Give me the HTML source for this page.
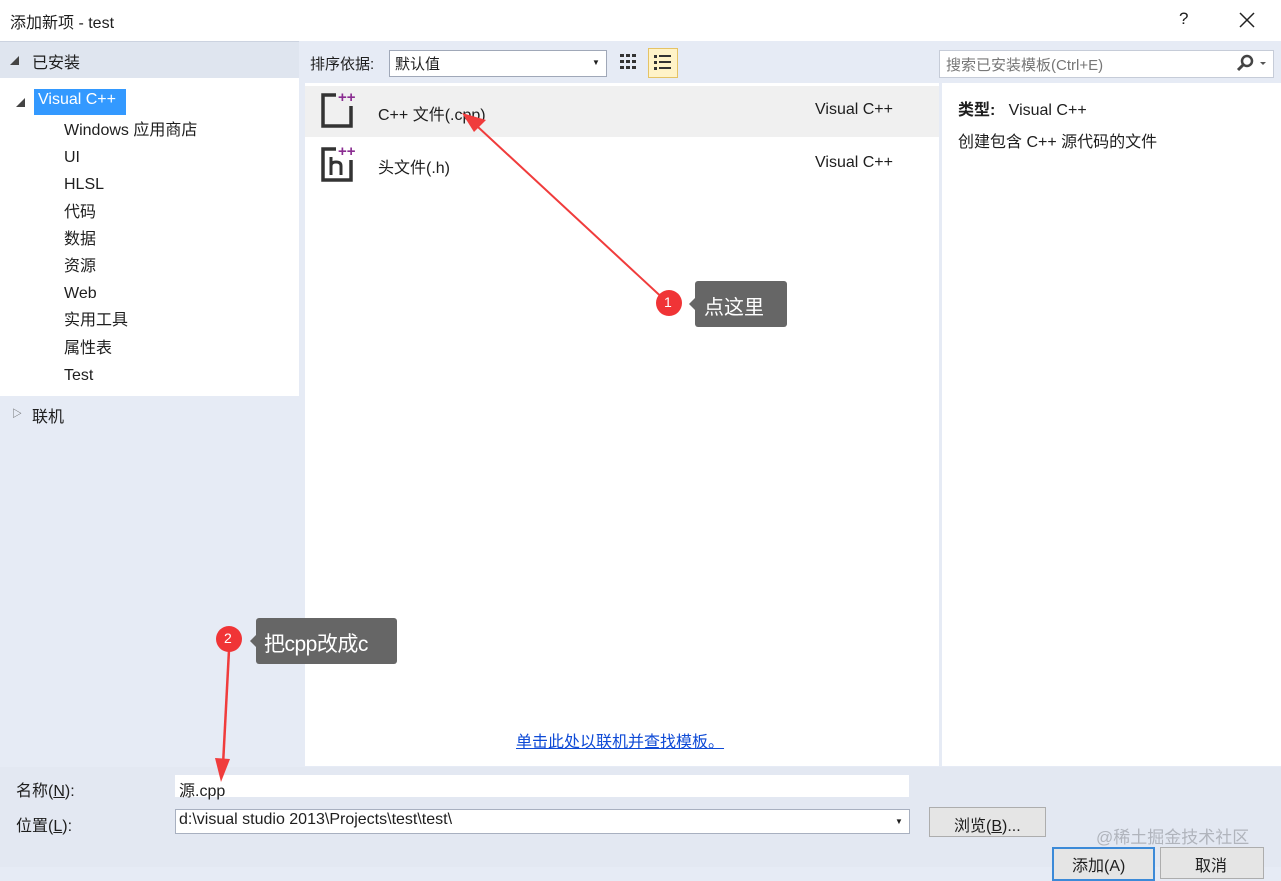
<!DOCTYPE html>
<html><head><meta charset="utf-8"><style>
body{margin:0;width:1281px;height:867px;overflow:hidden;background:#e6ebf5;font-family:"Liberation Sans","Noto Sans CJK SC",sans-serif;font-size:16px;color:#1e1e1e;position:relative}
.a{position:absolute}
</style></head><body>
<div class="a" style="left:0;top:0;width:1281px;height:41px;background:#fff"></div>
<div class="a" style="left:10px;top:9px;font-size:16px">添加新项 - test</div>
<div class="a" style="left:1179px;top:9px;font-size:17px">?</div>
<svg class="a" style="left:1239px;top:12px" width="16" height="16"><path d="M1 1L15 15M15 1L1 15" stroke="#222" stroke-width="1.5"/></svg>

<!-- left -->
<div class="a" style="left:0;top:41px;width:299px;height:36px;background:#dfe5ef;border-bottom:1px solid #ccd3e0;border-top:1px solid #ccd3e0"></div>
<div class="a" style="left:10px;top:54px;font-size:9px;color:#444">◢</div>
<div class="a" style="left:32px;top:49px">已安装</div>
<div class="a" style="left:0;top:78px;width:299px;height:318px;background:#fff"></div>
<div class="a" style="left:16px;top:96px;font-size:9px;color:#444">◢</div>
<div class="a" style="left:34px;top:89px;width:92px;height:26px;background:#3399ff"></div>
<div class="a" style="left:38px;top:91px;color:#fff">Visual C++</div>
<div class="a" style="left:64px;top:117px;line-height:27.2px">Windows 应用商店<br>UI<br>HLSL<br>代码<br>数据<br>资源<br>Web<br>实用工具<br>属性表<br>Test</div>
<div class="a" style="left:12px;top:405px;font-size:10px;color:#555">▷</div>
<div class="a" style="left:32px;top:403px">联机</div>

<!-- toolbar -->
<div class="a" style="left:310px;top:53px;font-size:15px">排序依据:</div>
<div class="a" style="left:389px;top:50px;width:216px;height:25px;background:#fff;border:1px solid #a0a8b8"></div>
<div class="a" style="left:395px;top:53px;font-size:15px">默认值</div>
<div class="a" style="left:592px;top:58px;font-size:8px">▼</div>
<svg class="a" style="left:619px;top:53px" width="20" height="20"><g fill="#333"><rect x="1" y="1" width="4" height="3"/><rect x="7" y="1" width="4" height="3"/><rect x="13" y="1" width="4" height="3"/><rect x="1" y="7" width="4" height="3"/><rect x="7" y="7" width="4" height="3"/><rect x="13" y="7" width="4" height="3"/><rect x="1" y="13" width="4" height="3"/><rect x="7" y="13" width="4" height="3"/><rect x="13" y="13" width="4" height="3"/></g></svg>
<div class="a" style="left:648px;top:48px;width:28px;height:28px;background:#fff3c8;border:1px solid #e5c365"></div>
<svg class="a" style="left:654px;top:54px" width="18" height="18"><g fill="#333"><rect x="0" y="1" width="3" height="3"/><rect x="5" y="1" width="12" height="2"/><rect x="0" y="7" width="3" height="3"/><rect x="5" y="7" width="12" height="2"/><rect x="0" y="13" width="3" height="3"/><rect x="5" y="13" width="12" height="2"/></g></svg>
<div class="a" style="left:939px;top:50px;width:333px;height:26px;background:#fff;border:1px solid #c6ccd8"></div>
<div class="a" style="left:946px;top:54px;color:#777;font-size:15px">搜索已安装模板(Ctrl+E)</div>
<svg class="a" style="left:1236px;top:54px" width="32" height="18"><circle cx="11" cy="7" r="5" fill="none" stroke="#444" stroke-width="2.5"/><line x1="7" y1="11" x2="2" y2="16" stroke="#444" stroke-width="3"/><path d="M24 8h6l-3 3z" fill="#555"/></svg>

<!-- list -->
<div class="a" style="left:305px;top:83px;width:634px;height:683px;background:#fff"></div>
<div class="a" style="left:305px;top:86px;width:634px;height:51px;background:#f0f0f0"></div>
<svg class="a" style="left:318px;top:88px" width="44" height="46"><path d="M18 7H5V38H33V18" fill="none" stroke="#333" stroke-width="3.5"/><text x="20" y="14" fill="#8a2d91" font-size="15" font-weight="bold" font-family="Liberation Sans">++</text></svg>
<div class="a" style="left:378px;top:101px">C++ 文件(.cpp)</div>
<div class="a" style="left:815px;top:101px">Visual C++</div>
<svg class="a" style="left:318px;top:142px" width="44" height="46"><path d="M18 7H5V38H33V18" fill="none" stroke="#333" stroke-width="3.5"/><path d="M13 15v18M13 24q0-4 5-4t5 4v9" fill="none" stroke="#333" stroke-width="3"/><text x="20" y="14" fill="#8a2d91" font-size="15" font-weight="bold" font-family="Liberation Sans">++</text></svg>
<div class="a" style="left:378px;top:154px">头文件(.h)</div>
<div class="a" style="left:815px;top:154px">Visual C++</div>
<div class="a" style="left:516px;top:728px;text-decoration:underline;color:#0e4ad6">单击此处以联机并查找模板。</div>

<!-- right -->
<div class="a" style="left:942px;top:83px;width:339px;height:683px;background:#fff"></div>
<div class="a" style="left:958px;top:96px"><b>类型:</b>&nbsp;&nbsp; Visual C++</div>
<div class="a" style="left:958px;top:128px">创建包含 C++ 源代码的文件</div>

<!-- bottom -->
<div class="a" style="left:0;top:767px;width:1281px;height:100px;background:#e3e8f2"></div>
<div class="a" style="left:16px;top:777px">名称(<u>N</u>):</div>
<div class="a" style="left:175px;top:775px;width:734px;height:22px;background:#fff"></div>
<div class="a" style="left:179px;top:777px">源.cpp</div>
<div class="a" style="left:16px;top:812px">位置(<u>L</u>):</div>
<div class="a" style="left:175px;top:809px;width:733px;height:23px;background:#fff;border:1px solid #a8b0c0"></div>
<div class="a" style="left:179px;top:811px">d:\visual studio 2013\Projects\test\test\</div>
<div class="a" style="left:895px;top:817px;font-size:8px">▼</div>
<div class="a" style="left:929px;top:807px;width:115px;height:28px;background:#e5e5e5;border:1px solid #adadad"></div>
<div class="a" style="left:954px;top:812px">浏览(<u>B</u>)...</div>
<div class="a" style="left:1096px;top:823px;color:#b0b4bc;font-size:17px">@稀土掘金技术社区</div>
<div class="a" style="left:1052px;top:847px;width:99px;height:30px;background:#e5e5e5;border:2px solid #3c8ad8"></div>
<div class="a" style="left:1072px;top:852px">添加(A)</div>
<div class="a" style="left:1160px;top:847px;width:102px;height:30px;background:#e5e5e5;border:1px solid #adadad"></div>
<div class="a" style="left:1195px;top:852px">取消</div>

<!-- annotations -->
<svg class="a" style="left:0;top:0" width="1281" height="867">
<line x1="668" y1="303" x2="478" y2="127" stroke="#f03c3c" stroke-width="2"/>
<path d="M462 113 L486 120 L474 132 Z" fill="#f03c3c"/>
<line x1="229" y1="650" x2="223" y2="765" stroke="#f03c3c" stroke-width="2.5"/>
<path d="M221 782 L215 758 L230 759 Z" fill="#f03c3c"/>
<circle cx="669" cy="303" r="13" fill="#f03436"/>
<circle cx="229" cy="639" r="13" fill="#f03436"/>
</svg>
<div class="a" style="left:664px;top:294px;color:#fff;font-size:14px">1</div>
<div class="a" style="left:224px;top:630px;color:#fff;font-size:14px">2</div>
<div class="a" style="left:695px;top:281px;width:92px;height:46px;background:#666;border-radius:3px"></div>
<div class="a" style="left:689px;top:298px;width:0;height:0;border:6px solid transparent;border-right-color:#666;border-left:0"></div>
<div class="a" style="left:704px;top:291px;color:#fff;font-size:20px">点这里</div>
<div class="a" style="left:256px;top:618px;width:141px;height:46px;background:#666;border-radius:3px"></div>
<div class="a" style="left:250px;top:635px;width:0;height:0;border:6px solid transparent;border-right-color:#666;border-left:0"></div>
<div class="a" style="left:264px;top:628px;color:#fff;font-size:21px;letter-spacing:-0.5px">把cpp改成c</div>
</body></html>
